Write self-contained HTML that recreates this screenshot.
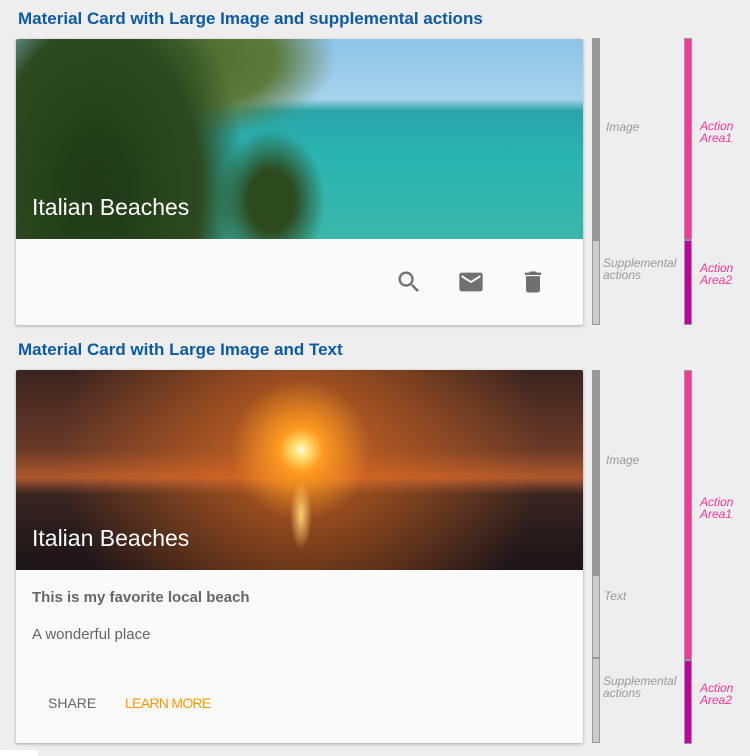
<!DOCTYPE html>
<html><head><meta charset="utf-8"><style>
*{margin:0;padding:0;box-sizing:border-box}
body{width:750px;height:756px;background:#eeeeee;font-family:"Liberation Sans",sans-serif;position:relative;overflow:hidden}
.h{position:absolute;left:18px;color:#0d5aa7;font-weight:bold;font-size:17px}
.card{position:absolute;left:16px;width:567px;background:#fafafa;border-radius:2px;box-shadow:0 1px 3px rgba(0,0,0,.3)}
.img{position:relative;height:200px;border-radius:2px 2px 0 0;overflow:hidden}
.ttl{position:absolute;left:16px;bottom:18px;color:#fff;font-size:23px}
.bar{position:absolute;width:8px;border:1px solid #999}
.lbl{position:absolute;font-style:italic;font-size:12px;color:#999;line-height:12px}
.pl{position:absolute;font-style:italic;font-size:12px;color:#ff3399;line-height:12px}
</style></head><body>
<div class="h" style="top:9px">Material Card with Large Image and supplemental actions</div>
<div class="card" style="top:39px;height:286px">
 <div class="img" style="background:
  radial-gradient(ellipse 150px 230px at 80px 150px,#1f3a16 0%,#2c4a1f 70%,rgba(44,74,31,0) 100%),
  radial-gradient(ellipse 150px 80px at 170px 20px,#4c6a30 0%,#5c7a3a 60%,rgba(92,122,58,0) 100%),
  linear-gradient(180deg,#8ec4e6 0%,#a7d3ec 30%,#2aa4a8 36%,#2ab5b0 60%,#3ab7aa 100%)">
  <div style="position:absolute;left:200px;top:90px;width:110px;height:120px;background:radial-gradient(ellipse at 50% 60%,#2d4a1e 30%,rgba(45,74,30,0) 70%)"></div>
  <div class="ttl">Italian Beaches</div>
 </div>
 <svg style="position:absolute;left:379px;top:229px" width="28" height="28" viewBox="0 0 24 24"><path fill="#707070" d="M15.5 14h-.79l-.28-.27A6.47 6.47 0 0 0 16 9.5 6.5 6.5 0 1 0 9.5 16c1.61 0 3.09-.59 4.23-1.57l.27.28v.79l5 4.99L20.49 19l-4.99-5zm-6 0C7.01 14 5 11.99 5 9.5S7.01 5 9.5 5 14 7.01 14 9.5 11.99 14 9.5 14z"/></svg>
 <svg style="position:absolute;left:441px;top:229px" width="28" height="28" viewBox="0 0 24 24"><path fill="#707070" d="M20 4H4c-1.1 0-2 .9-2 2v12c0 1.1.9 2 2 2h16c1.1 0 2-.9 2-2V6c0-1.1-.9-2-2-2zm0 4l-8 5-8-5V6l8 5 8-5v2z"/></svg>
 <svg style="position:absolute;left:503px;top:229px" width="28" height="28" viewBox="0 0 24 24"><path fill="#707070" d="M6 19c0 1.1.9 2 2 2h8c1.1 0 2-.9 2-2V7H6v12zM19 4h-3.5l-1-1h-5l-1 1H5v2h14V4z"/></svg>
</div>
<div class="bar" style="left:592px;top:38px;height:202px;background:#999"></div>
<div class="bar" style="left:592px;top:240px;height:85px;background:#ccc"></div>
<div class="lbl" style="left:606px;top:121px">Image</div>
<div class="lbl" style="left:603px;top:257px">Supplemental<br>actions</div>
<div class="bar" style="left:684px;top:38px;height:202px;background:#ff3399"></div>
<div class="bar" style="left:684px;top:240px;height:85px;background:#c4009a"></div>
<div class="pl" style="left:700px;top:120px">Action<br>Area1</div>
<div class="pl" style="left:700px;top:262px">Action<br>Area2</div>

<div class="h" style="top:340px">Material Card with Large Image and Text</div>
<div class="card" style="top:370px;height:373px">
 <div class="img" style="background:
  radial-gradient(circle at 285px 80px,#fffbe0 0px,#ffe070 8px,#ff9a20 22px,rgba(230,110,30,.55) 70px,rgba(150,60,30,0) 240px),
  linear-gradient(180deg,#3a2420 0%,#6a3a28 40%,#b0582a 54%,#8a4a30 56%,#3a2520 62%,#2a1c1c 80%,#1c1418 100%)">
  <div style="position:absolute;left:274px;top:110px;width:22px;height:70px;background:radial-gradient(ellipse,#ffd070,rgba(255,160,60,0) 70%)"></div>
  <div class="ttl">Italian Beaches</div>
 </div>
 <div style="position:absolute;left:16px;top:219px;font-weight:bold;font-size:15px;color:#666">This is my favorite local beach</div>
 <div style="position:absolute;left:16px;top:256px;font-size:15px;color:#666">A wonderful place</div>
 <div style="position:absolute;left:32px;top:325px;font-size:14px;color:#666">SHARE</div>
 <div style="position:absolute;left:109px;top:325px;font-size:14px;color:#ff9800;letter-spacing:-0.7px">LEARN MORE</div>
</div>
<div class="bar" style="left:592px;top:370px;height:205px;background:#999"></div>
<div class="bar" style="left:592px;top:575px;height:83px;background:#ccc"></div>
<div class="bar" style="left:592px;top:658px;height:85px;background:#ccc"></div>
<div class="lbl" style="left:606px;top:454px">Image</div>
<div class="lbl" style="left:604px;top:590px">Text</div>
<div class="lbl" style="left:603px;top:675px">Supplemental<br>actions</div>
<div class="bar" style="left:684px;top:370px;height:290px;background:#ff3399"></div>
<div class="bar" style="left:684px;top:660px;height:84px;background:#c4009a"></div>
<div class="pl" style="left:700px;top:496px">Action<br>Area1</div>
<div class="pl" style="left:700px;top:682px">Action<br>Area2</div>
<div style="position:absolute;left:0;top:750px;width:38px;height:6px;background:#fff"></div>
</body></html>
